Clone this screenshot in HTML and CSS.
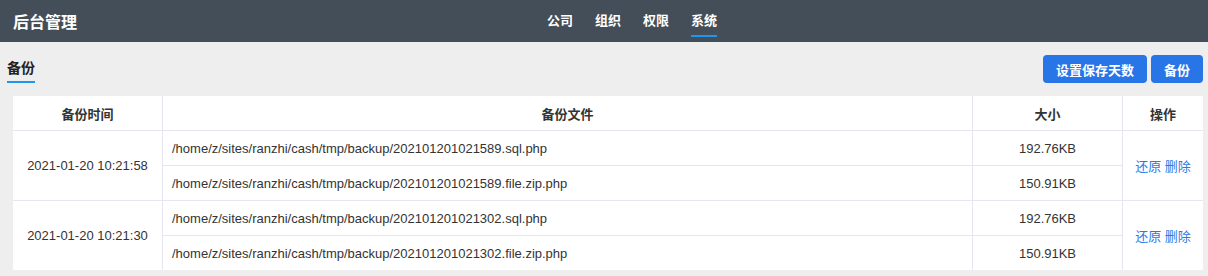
FILE: index.html
```html
<!DOCTYPE html>
<html lang="zh-CN">
<head>
  <meta charset="UTF-8">
  <title>后台管理</title>
  <link rel="stylesheet" href="styles.css">
</head>
<body>
  <!-- 顶部 -->
  <header class="topbar">
    <div class="brand">后台管理</div>
    <nav class="menu">
      <a href="#">公司</a>
      <a href="#">组织</a>
      <a href="#">权限</a>
      <a href="#" class="active">系统</a>
    </nav>
    <div></div>
  </header>

  <!-- 备份 -->
  <div class="toolbar">
    <div class="tab">备份</div>
    <div class="actions">
      <button class="btn">设置保存天数</button>
      <button class="btn">备份</button>
    </div>
  </div>

  <table class="list">
    <thead>
      <tr>
        <th class="c-time">备份时间</th>
        <th>备份文件</th>
        <th class="c-size">大小</th>
        <th class="c-op">操作</th>
      </tr>
    </thead>
    <tbody>
      <tr>
        <td rowspan="2" class="center">2021-01-20 10:21:58</td>
        <td>/home/z/sites/ranzhi/cash/tmp/backup/202101201021589.sql.php</td>
        <td class="center">192.76KB</td>
        <td rowspan="2" class="center"><a href="#">还原</a> <a href="#">删除</a></td>
      </tr>
      <tr>
        <td>/home/z/sites/ranzhi/cash/tmp/backup/202101201021589.file.zip.php</td>
        <td class="center">150.91KB</td>
      </tr>
      <tr>
        <td rowspan="2" class="center">2021-01-20 10:21:30</td>
        <td>/home/z/sites/ranzhi/cash/tmp/backup/202101201021302.sql.php</td>
        <td class="center">192.76KB</td>
        <td rowspan="2" class="center"><a href="#">还原</a> <a href="#">删除</a></td>
      </tr>
      <tr>
        <td>/home/z/sites/ranzhi/cash/tmp/backup/202101201021302.file.zip.php</td>
        <td class="center">150.91KB</td>
      </tr>
    </tbody>
  </table>
</body>
</html>
```

FILE: styles.css
```css
/* General */
body {
  margin: 0;
  background-color: #eeeeee;
  font-family: "Liberation Sans", Arial, "Noto Sans CJK SC", sans-serif;
  font-size: 13px;
  color: #333;
}
a {
  text-decoration: none;
  color: #2b7be5;
}
/* Top bar */
.topbar {
  height: 42px;
  background-color: #444e59;
  display: grid;
  grid-template-columns: 1fr auto 1fr;
  align-items: center;
  padding: 0 13px;
}
.brand {
  color: #fff;
  font-size: 16px;
  font-weight: bold;
}
.menu {
  display: flex;
  gap: 22px;
  height: 42px;
  padding-left: 56px;
}
.menu a {
  color: #fff;
  font-weight: bold;
  font-size: 13px;
  line-height: 42px;
  position: relative;
}
.menu a.active::after {
  content: "";
  position: absolute;
  left: 0;
  right: 0;
  bottom: 5px;
  height: 2px;
  background-color: #1f95ef;
}
/* Toolbar */
.toolbar {
  display: flex;
  justify-content: space-between;
  align-items: flex-start;
  padding: 13px 5px 0 7px;
  height: 41px;
}
.tab {
  font-size: 14px;
  font-weight: bold;
  color: #222;
  margin-top: 3px;
  padding-bottom: 3px;
  border-bottom: 2px solid #1f95ef;
  line-height: 20px;
}
.actions {
  display: flex;
  gap: 4px;
}
.btn {
  height: 28px;
  padding: 0 13px;
  border: none;
  border-radius: 4px;
  background-color: #2775e6;
  color: #fff;
  font-family: inherit;
  font-size: 13px;
  font-weight: bold;
}
/* Table */
.list {
  margin: 0 5px 0 13px;
  width: 1190px;
  border-collapse: collapse;
  background-color: #fff;
  table-layout: fixed;
}
.list th,
.list td {
  border: 1px solid #e6e6f0;
  height: 34px;
  padding: 0 9px;
  white-space: nowrap;
}
.list th {
  text-align: center;
  font-weight: bold;
}
.list tr > :first-child {
  border-left: none;
}
.list tr > :last-child {
  border-right: none;
}
.list thead th {
  border-top: none;
}
.list tbody tr:last-child td,
.list td[rowspan] {
  border-bottom: none;
}
.list tbody tr:nth-child(2) td:only-child,
.list tbody tr:nth-child(2) td {
  border-bottom: 1px solid #e6e6f0;
}
.c-time { width: 131px; }
.c-size { width: 131px; }
.c-op { width: 62px; }
.center {
  text-align: center;
}
```
